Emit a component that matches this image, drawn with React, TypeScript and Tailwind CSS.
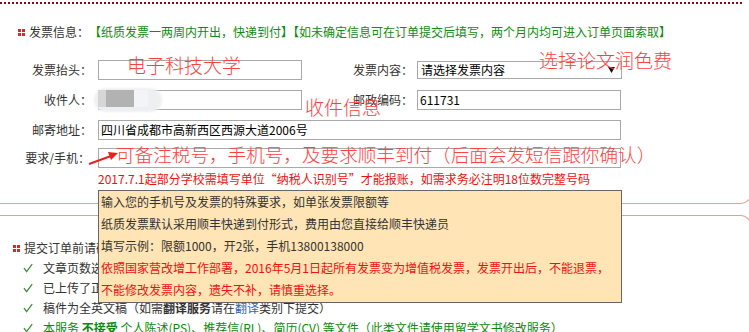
import React from 'react';

const RedDots = () => (
  <span className="grid grid-cols-2 gap-[1px] w-[7px] h-[7px] shrink-0">
    {[0, 1, 2, 3].map((i) => (
      <span key={i} className="block w-[3px] h-[3px] bg-[#d42a2a]" />
    ))}
  </span>
);

const Check = () => (
  <svg width="10" height="10" viewBox="0 0 10 10" className="shrink-0">
    <path d="M1 5.2 L3.6 8.6 L9.2 1.2" fill="none" stroke="#3f8f3f" strokeWidth="1.3" />
  </svg>
);

const Label = ({ w, children }: { w: string; children: React.ReactNode }) => (
  <span className={`${w} shrink-0 text-right text-[12px] leading-[18px] text-[#333]`}>{children}</span>
);

const Box = ({ w, children }: { w: string; children?: React.ReactNode }) => (
  <div className={`${w} h-[20px] shrink-0 border border-[#a9a9a9] bg-white pl-[2px] text-[12px] leading-[18px] text-black`}>
    {children}
  </div>
);

const checks: React.ReactNode[] = [
  '文章页数选择正确，已确认订单金额',
  '已上传了正确的稿件文件',
  <>
    稿件为全英文稿（如需<b className="font-bold">翻译服务</b>请在<span className="text-[#2f62c0]">翻译</span>类别下提交）
  </>,
  <span className="text-[#0a8a0a]">
    本服务 <b className="font-bold">不接受</b> 个人陈述(PS)、推荐信(RL)、简历(CV) 等文件（此类文件请使用留学文书修改服务）
  </span>,
];

const tips = [
  { text: '输入您的手机号及发票的特殊要求，如单张发票限额等', red: false },
  { text: '纸质发票默认采用顺丰快递到付形式，费用由您直接给顺丰快递员', red: false },
  { text: '填写示例：限额1000，开2张，手机13800138000', red: false },
  { text: '依照国家营改增工作部署，2016年5月1日起所有发票变为增值税发票，发票开出后，不能退票，', red: true },
  { text: '不能修改发票内容，遗失不补，请慎重选择。', red: true },
];

export default function App() {
  return (
    <div className="relative w-[749px] h-[332px] overflow-hidden bg-white font-['Noto_Sans_CJK_SC','Noto_Sans',sans-serif] text-[#333]">
      <div className="mt-[2px] w-[742px] border-t-2 border-dotted border-[#8b0a0a]" />

      {/* invoice box */}
      <div className="w-[751px] rounded-br-[10px] border-r border-b border-[#eb9a9a] pb-[15px]">
        <div className="mt-[19px] flex h-[18px] items-center pl-[18px] text-[12px] leading-[18px]">
          <RedDots />
          <span className="ml-[4px]">发票信息：</span>
          <span className="text-[#118a11]">
            【纸质发票一两周内开出，快递到付】【如未确定信息可在订单提交后填写，两个月内均可进入订单页面索取】
          </span>
        </div>

        <div className="mt-[19px] flex h-[20px] items-center">
          <Label w="w-[92px]">发票抬头：</Label>
          <div className="ml-[6px]"><Box w="w-[204px]" /></div>
          <Label w="w-[111px]">发票内容：</Label>
          <div className="ml-[4px] flex h-[18px] w-[205px] items-center justify-between border border-[#a9a9a9] pl-[3px] pr-[6px] text-[12px] leading-[16px] text-black">
            <span>请选择发票内容</span>
            <svg width="7" height="6" viewBox="0 0 7 6"><path d="M0 0 H7 L3.5 6 Z" fill="#111" /></svg>
          </div>
        </div>

        <div className="mt-[10px] flex h-[20px] items-center">
          <Label w="w-[92px]">收件人：</Label>
          <div className="relative ml-[6px]">
            <Box w="w-[204px]" />
            <div className="absolute left-[-4px] top-[-2px] h-[24px] w-[68px] rounded-[12px] bg-[#eeeff1] blur-[1px]" />
            <div className="absolute left-[0px] top-[0px] h-[17px] w-[10px] bg-[#d6d6d6]" />
            <div className="absolute left-[8px] top-[0px] h-[17px] w-[28px] bg-[#b2b2b2]" />
            <div className="absolute left-[36px] top-[0px] h-[17px] w-[14px] bg-[#f3f4f7]" />
          </div>
          <Label w="w-[111px]">邮政编码：</Label>
          <div className="ml-[4px]"><Box w="w-[204px]">611731</Box></div>
        </div>

        <div className="mt-[10px] flex h-[20px] items-center">
          <Label w="w-[92px]">邮寄地址：</Label>
          <div className="ml-[6px]"><Box w="w-[523px]">四川省成都市高新西区西源大道2006号</Box></div>
        </div>

        <div className="mt-[8px] flex h-[20px] items-center">
          <Label w="w-[90px]">要求/手机：</Label>
          <div className="ml-[8px]"><Box w="w-[523px]" /></div>
        </div>

        <div className="mt-[2px] pl-[98px] text-[12px] leading-[18px] text-[#f01010]">
          2017.7.1起部分学校需填写单位“纳税人识别号”才能报账，如需求务必注明18位数完整号码
        </div>
      </div>

      {/* confirm box */}
      <div className="mt-[11px] w-[751px] rounded-tr-[10px] border-t border-r border-[#eb9a9a] pt-[23px]">
        <div className="flex h-[18px] items-center pl-[13px] text-[12px] leading-[18px]">
          <RedDots />
          <span className="ml-[4px]">提交订单前请确认以下事项：</span>
        </div>
        <div className="mt-[1px] flex flex-col">
          {checks.map((c, i) => (
            <div key={i} className="flex h-[20px] items-center pl-[23px] text-[12px] leading-[20px] text-[#333]">
              <Check />
              <span className="ml-[10px] whitespace-nowrap">{c}</span>
            </div>
          ))}
        </div>
      </div>

      {/* tooltip */}
      <div className="absolute left-[98px] top-[190px] h-[113px] w-[524px] border border-[#666] bg-[#ffe4b5] pl-[2px] text-[12px] leading-[22px]">
        {tips.map((t, i) => (
          <div key={i} className={t.red ? 'text-[#f01010]' : 'text-[#333]'}>{t.text}</div>
        ))}
      </div>

      {/* handwritten annotations */}
      <span className="absolute left-[127px] top-[53px] text-[19px] leading-[24px] font-light text-[#ff4040]">电子科技大学</span>
      <span className="absolute left-[539px] top-[48px] text-[19px] leading-[24px] font-light text-[#ff4040]">选择论文润色费</span>
      <span className="absolute left-[305px] top-[95px] text-[19px] leading-[24px] font-light text-[#ff4040]">收件信息</span>
      <span className="absolute left-[116px] top-[142px] text-[18.6px] leading-[24px] font-light text-[#ff4040]">
        可备注税号，手机号，及要求顺丰到付（后面会发短信跟你确认）
      </span>
      <svg className="absolute left-[85px] top-[148px]" width="36" height="20" viewBox="0 0 36 20">
        <path d="M4 16 L26 8" stroke="#e82020" strokeWidth="2" fill="none" />
        <path d="M33 5 L23 4 L26 12 Z" fill="#e82020" />
      </svg>
    </div>
  );
}
